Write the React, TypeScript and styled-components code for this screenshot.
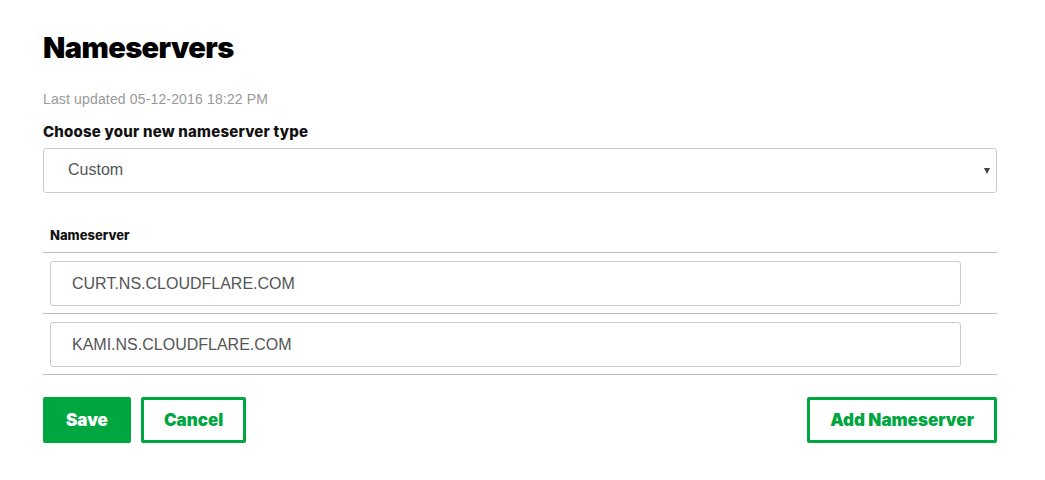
import React from "react";
import styled, { createGlobalStyle } from "styled-components";

const Global = createGlobalStyle`
  html, body { margin: 0; padding: 0; background: #fff; }
  body { font-family: "Liberation Sans", Arial, sans-serif; }
`;

const Page = styled.div`
  padding: 28px 48px 0 43px;
  display: flex;
  flex-direction: column;
`;

const Title = styled.h1`
  margin: 0;
  font-family: "Inter", "Lato", sans-serif;
  font-weight: 900;
  font-size: 29px;
  line-height: 40px;
  letter-spacing: -0.6px;
  color: #000;
`;

const Updated = styled.div`
  margin-top: 23px;
  font-size: 14px;
  line-height: 16px;
  letter-spacing: 0.15px;
  color: #999;
`;

const Label = styled.div`
  margin-top: 16px;
  font-family: "Inter", "Lato", sans-serif;
  font-weight: 800;
  font-size: 15px;
  line-height: 18px;
  letter-spacing: 0.2px;
  color: #111;
`;

const SelectBox = styled.div`
  margin-top: 7px;
  height: 45px;
  box-sizing: border-box;
  border: 1px solid #ccc;
  border-radius: 3px;
  display: flex;
  align-items: center;
  justify-content: space-between;
  padding: 0 6px 1px 24px;
  font-size: 16px;
  color: #555;
`;

const Caret = styled.span`
  width: 0;
  height: 0;
  border-left: 3px solid transparent;
  border-right: 3px solid transparent;
  border-top: 6px solid #444;
  margin-top: 1px;
`;

const Table = styled.div`
  margin-top: 34px;
  display: flex;
  flex-direction: column;
`;

const HeaderCell = styled.div`
  padding: 0 7px 9px;
  font-family: "Inter", "Lato", sans-serif;
  font-weight: 800;
  font-size: 13px;
  line-height: 16px;
  color: #111;
  border-bottom: 1px solid #bbb;
`;

const Row = styled.div`
  padding: 8px 36px 7px 7px;
  border-bottom: 1px solid #bbb;
  display: flex;
`;

const Input = styled.div`
  flex: 1;
  height: 45px;
  box-sizing: border-box;
  border: 1px solid #ccc;
  border-radius: 3px;
  display: flex;
  align-items: center;
  padding-left: 21px;
  font-size: 16px;
  color: #555;
`;

const Actions = styled.div`
  margin-top: 22px;
  display: flex;
  align-items: center;
  gap: 10px;
`;

const Spacer = styled.div`
  flex: 1;
`;

const Button = styled.button<{ $primary?: boolean }>`
  height: 46px;
  box-sizing: border-box;
  border-radius: 2px;
  border: 3px solid #00a63f;
  background: ${(p) => (p.$primary ? "#00a63f" : "#fff")};
  color: ${(p) => (p.$primary ? "#fff" : "#00a63f")};
  font-family: "Inter", "Lato", sans-serif;
  font-weight: 900;
  font-size: 17px;
  padding: 0 20px;
  cursor: pointer;
`;

export default function App() {
  return (
    <>
      <Global />
      <Page>
        <Title>Nameservers</Title>
        <Updated>Last updated 05-12-2016 18:22 PM</Updated>
        <Label>Choose your new nameserver type</Label>
        <SelectBox>
          <span>Custom</span>
          <Caret />
        </SelectBox>
        <Table>
          <HeaderCell>Nameserver</HeaderCell>
          <Row>
            <Input>CURT.NS.CLOUDFLARE.COM</Input>
          </Row>
          <Row>
            <Input>KAMI.NS.CLOUDFLARE.COM</Input>
          </Row>
        </Table>
        <Actions>
          <Button $primary>Save</Button>
          <Button>Cancel</Button>
          <Spacer />
          <Button>Add Nameserver</Button>
        </Actions>
      </Page>
    </>
  );
}
